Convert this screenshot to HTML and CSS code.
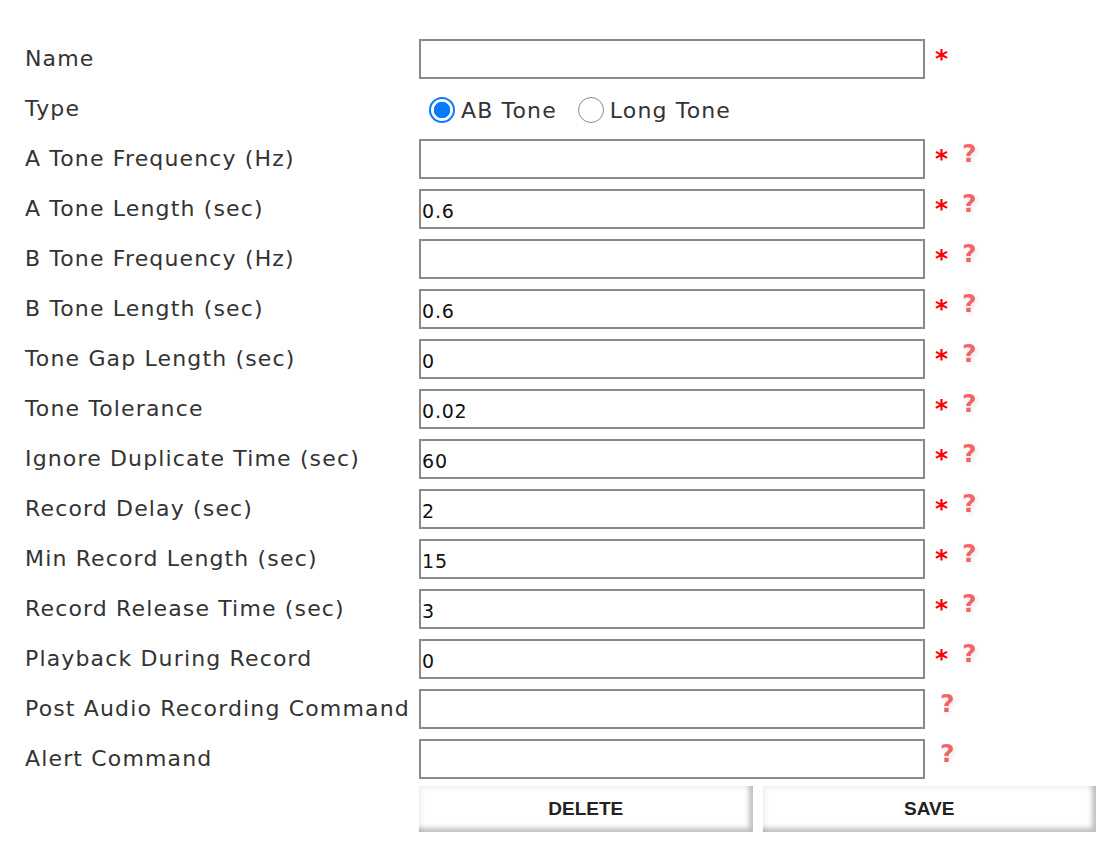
FILE: index.html
```html
<!DOCTYPE html>
<html lang="en">
<head>
    <meta charset="UTF-8">
    <title>Tone Detail</title>
    <link rel="stylesheet" href="styles.css">
</head>
<body>

    <form class="tone-form">
        <div class="row">
            <label class="field-label" for="name">Name</label>
            <div class="field">
                <input type="text" id="name" class="text-input">
                <span class="req">*</span>
            </div>
        </div>

        <div class="row">
            <span class="field-label">Type</span>
            <div class="field radios">
                <label class="radio"><input type="radio" name="type" checked><span class="dot"></span>AB Tone</label>
                <label class="radio"><input type="radio" name="type"><span class="dot"></span>Long Tone</label>
            </div>
        </div>

        <div class="row">
            <label class="field-label" for="afreq">A Tone Frequency (Hz)</label>
            <div class="field">
                <input type="text" id="afreq" class="text-input">
                <span class="req">*</span><span class="help">?</span>
            </div>
        </div>

        <div class="row">
            <label class="field-label" for="alen">A Tone Length (sec)</label>
            <div class="field">
                <input type="text" id="alen" class="text-input" value="0.6">
                <span class="req">*</span><span class="help">?</span>
            </div>
        </div>

        <div class="row">
            <label class="field-label" for="bfreq">B Tone Frequency (Hz)</label>
            <div class="field">
                <input type="text" id="bfreq" class="text-input">
                <span class="req">*</span><span class="help">?</span>
            </div>
        </div>

        <div class="row">
            <label class="field-label" for="blen">B Tone Length (sec)</label>
            <div class="field">
                <input type="text" id="blen" class="text-input" value="0.6">
                <span class="req">*</span><span class="help">?</span>
            </div>
        </div>

        <div class="row">
            <label class="field-label" for="gap">Tone Gap Length (sec)</label>
            <div class="field">
                <input type="text" id="gap" class="text-input" value="0">
                <span class="req">*</span><span class="help">?</span>
            </div>
        </div>

        <div class="row">
            <label class="field-label" for="tol">Tone Tolerance</label>
            <div class="field">
                <input type="text" id="tol" class="text-input" value="0.02">
                <span class="req">*</span><span class="help">?</span>
            </div>
        </div>

        <div class="row">
            <label class="field-label" for="dup">Ignore Duplicate Time (sec)</label>
            <div class="field">
                <input type="text" id="dup" class="text-input" value="60">
                <span class="req">*</span><span class="help">?</span>
            </div>
        </div>

        <div class="row">
            <label class="field-label" for="delay">Record Delay (sec)</label>
            <div class="field">
                <input type="text" id="delay" class="text-input" value="2">
                <span class="req">*</span><span class="help">?</span>
            </div>
        </div>

        <div class="row">
            <label class="field-label" for="minlen">Min Record Length (sec)</label>
            <div class="field">
                <input type="text" id="minlen" class="text-input" value="15">
                <span class="req">*</span><span class="help">?</span>
            </div>
        </div>

        <div class="row">
            <label class="field-label" for="release">Record Release Time (sec)</label>
            <div class="field">
                <input type="text" id="release" class="text-input" value="3">
                <span class="req">*</span><span class="help">?</span>
            </div>
        </div>

        <div class="row">
            <label class="field-label" for="playback">Playback During Record</label>
            <div class="field">
                <input type="text" id="playback" class="text-input" value="0">
                <span class="req">*</span><span class="help">?</span>
            </div>
        </div>

        <div class="row">
            <label class="field-label" for="postcmd">Post Audio Recording Command</label>
            <div class="field">
                <input type="text" id="postcmd" class="text-input">
                <span class="help solo">?</span>
            </div>
        </div>

        <div class="row">
            <label class="field-label" for="alert">Alert Command</label>
            <div class="field">
                <input type="text" id="alert" class="text-input">
                <span class="help solo">?</span>
            </div>
        </div>

        <div class="row buttons-row">
            <span></span>
            <div class="buttons">
                <button type="button" class="btn">DELETE</button>
                <button type="button" class="btn">SAVE</button>
            </div>
        </div>
    </form>

</body>
</html>
```

FILE: styles.css
```css
* {
    box-sizing: border-box;
}

body {
    margin: 0;
    background: #fff;
    font-family: 'DejaVu Sans', Verdana, sans-serif;
    color: #333;
}

.tone-form {
    padding: 39px 0 0 25px;
}

.row {
    display: grid;
    grid-template-columns: 394px 677px;
    height: 50px;
}

.field-label {
    font-size: 22px;
    letter-spacing: 1.15px;
    line-height: 40px;
    white-space: nowrap;
}

.field {
    display: flex;
    align-items: center;
    height: 40px;
}

.text-input {
    width: 506px;
    height: 40px;
    margin: 0;
    padding: 3px 1px 0;
    border: 2px solid #8a8a8a;
    border-radius: 0;
    font-family: 'DejaVu Sans', Verdana, sans-serif;
    font-size: 19px;
    letter-spacing: 0.8px;
    color: #111;
    background: #fff;
    outline: none;
}

.req {
    color: #ff0000;
    font-size: 25px;
    font-weight: bold;
    margin: -2px 0 0 10px;
}

.help {
    color: #f56464;
    font-family: 'DejaVu Sans', Verdana, sans-serif;
    font-size: 25px;
    font-weight: bold;
    margin: -12px 0 0 14px;
    text-shadow: 2px 2px 4px rgba(0,0,0,0.1);
    filter: blur(0.7px);
}

.help.solo {
    margin-left: 15px;
}

.radios {
    gap: 0;
    padding-left: 10px;
}

.radio {
    display: flex;
    align-items: center;
    font-size: 22px;
    letter-spacing: 1.15px;
    margin-right: 21px;
    margin-top: 2px;
}

.radio input {
    display: none;
}

.radio .dot {
    width: 26px;
    height: 26px;
    border-radius: 50%;
    border: 1.5px solid #8a8a8a;
    margin-right: 6px;
    background: #fff;
}

.radio input:checked + .dot {
    border: 2px solid #0a7aff;
    background: radial-gradient(circle, #0a7aff 0 8px, #fff 8.5px);
}

.buttons-row {
    height: auto;
    margin-top: -3px;
}

.buttons {
    display: grid;
    grid-template-columns: 1fr 1fr;
    gap: 10px;
}

.btn {
    height: 46px;
    border: none;
    background: #fff;
    font-family: 'Liberation Sans', Arial, sans-serif;
    font-size: 19px;
    font-weight: bold;
    color: #222;
    box-shadow: inset -4px -4px 5px rgba(0,0,0,0.25), inset 3px 3px 4px rgba(0,0,0,0.06);
    cursor: pointer;
}
```
